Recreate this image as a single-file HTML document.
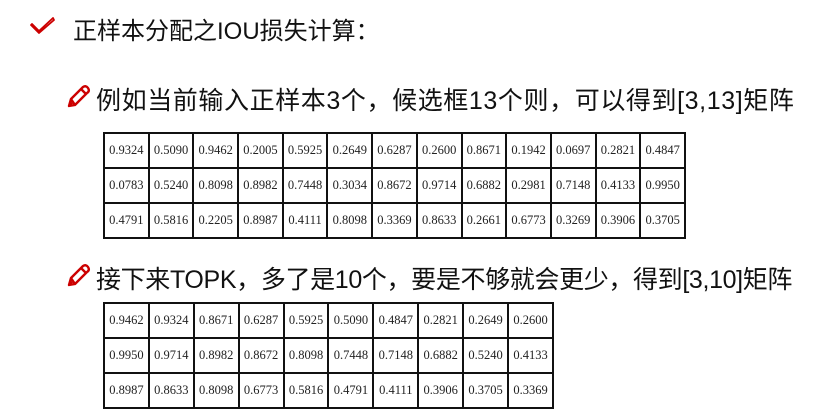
<!DOCTYPE html>
<html><head><meta charset="utf-8"><style>
body{margin:0;width:834px;height:420px;background:#fff;position:relative;overflow:hidden;font-family:"Liberation Sans","Noto Sans CJK SC",sans-serif;color:#111}
.t{position:absolute;white-space:nowrap}
table{position:absolute;border-collapse:collapse;font-family:"Liberation Serif",serif;font-size:12.5px;color:#222}
td{border:2px solid #111;height:33px;text-align:center;padding:0;width:41px}
</style></head><body>
<svg style="position:absolute;left:30px;top:15px" width="26" height="20" viewBox="0 0 26 20"><path d="M2 9 L9 16 L23 3 L24 5 L9 18 L1 10 Z" fill="none" stroke="#c00" stroke-width="1.8" stroke-linejoin="round"/></svg>
<div class="t" style="left:73px;top:11px;font-size:24px">正样本分配之IOU损失计算：</div>
<svg style="position:absolute;left:66px;top:84px" width="25" height="25" viewBox="0 0 25 25"><path d="M3 22 L5 15 L17 3 Q20 1 22 4 Q24 7 21 9 L9 21 Z M5 15 L9 21 M15 5 L20 10" fill="none" stroke="#c00" stroke-width="2.4" stroke-linejoin="round"/><path d="M3 22 L5 17 L7 20 Z" fill="#c00"/></svg>
<div class="t" style="left:96px;top:81px;font-size:25px;letter-spacing:0.6px">例如当前输入正样本3个，候选框13个则，可以得到[3,13]矩阵</div>
<table style="left:103px;top:132px;width:583px"><tr><td>0.9324</td><td>0.5090</td><td>0.9462</td><td>0.2005</td><td>0.5925</td><td>0.2649</td><td>0.6287</td><td>0.2600</td><td>0.8671</td><td>0.1942</td><td>0.0697</td><td>0.2821</td><td>0.4847</td></tr><tr><td>0.0783</td><td>0.5240</td><td>0.8098</td><td>0.8982</td><td>0.7448</td><td>0.3034</td><td>0.8672</td><td>0.9714</td><td>0.6882</td><td>0.2981</td><td>0.7148</td><td>0.4133</td><td>0.9950</td></tr><tr><td>0.4791</td><td>0.5816</td><td>0.2205</td><td>0.8987</td><td>0.4111</td><td>0.8098</td><td>0.3369</td><td>0.8633</td><td>0.2661</td><td>0.6773</td><td>0.3269</td><td>0.3906</td><td>0.3705</td></tr></table>
<svg style="position:absolute;left:66px;top:263px" width="25" height="25" viewBox="0 0 25 25"><path d="M3 22 L5 15 L17 3 Q20 1 22 4 Q24 7 21 9 L9 21 Z M5 15 L9 21 M15 5 L20 10" fill="none" stroke="#c00" stroke-width="2.4" stroke-linejoin="round"/><path d="M3 22 L5 17 L7 20 Z" fill="#c00"/></svg>
<div class="t" style="left:96px;top:260px;font-size:25px;letter-spacing:-0.35px">接下来TOPK，多了是10个，要是不够就会更少，得到[3,10]矩阵</div>
<table style="left:103px;top:302px;width:451px"><tr><td>0.9462</td><td>0.9324</td><td>0.8671</td><td>0.6287</td><td>0.5925</td><td>0.5090</td><td>0.4847</td><td>0.2821</td><td>0.2649</td><td>0.2600</td></tr><tr><td>0.9950</td><td>0.9714</td><td>0.8982</td><td>0.8672</td><td>0.8098</td><td>0.7448</td><td>0.7148</td><td>0.6882</td><td>0.5240</td><td>0.4133</td></tr><tr><td>0.8987</td><td>0.8633</td><td>0.8098</td><td>0.6773</td><td>0.5816</td><td>0.4791</td><td>0.4111</td><td>0.3906</td><td>0.3705</td><td>0.3369</td></tr></table>
</body></html>
